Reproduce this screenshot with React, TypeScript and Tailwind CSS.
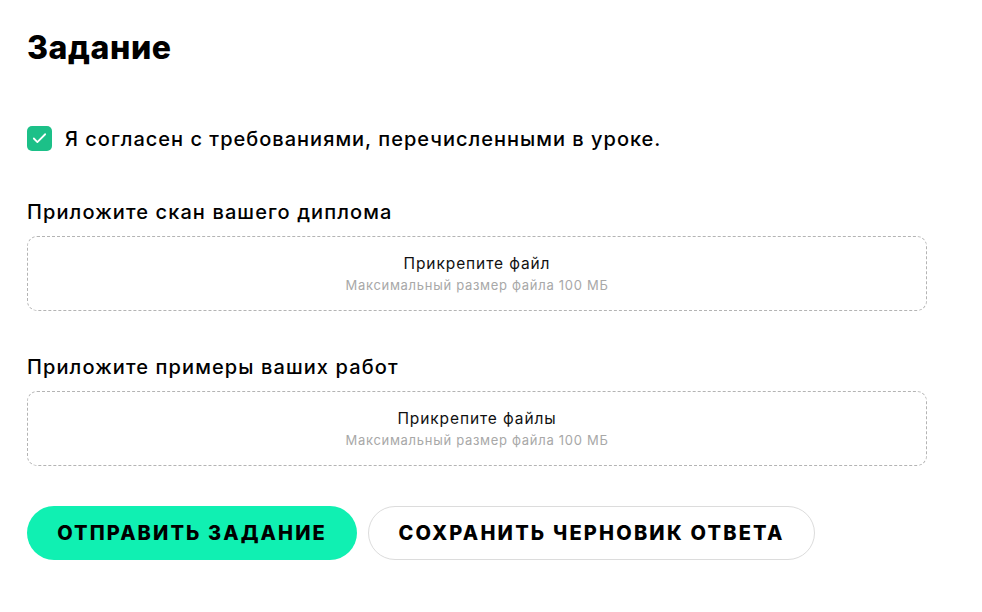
import { Check } from "lucide-react";

const FONT = { fontFamily: "Inter, 'Noto Sans', sans-serif" };

function Dropzone({ title }: { title: string }) {
  return (
    <div className="flex h-[75px] w-[900px] flex-col items-center justify-center rounded-[10px] border border-dashed border-[#b4b4b4]">
      <div className="text-[15.5px] leading-5 tracking-[0.9px] text-[#111]">{title}</div>
      <div className="mt-[3px] text-[13px] leading-4 tracking-[0.7px] text-[#a8a8a8]">
        Максимальный размер файла 100 МБ
      </div>
    </div>
  );
}

export default function App() {
  return (
    <div className="min-h-screen bg-white px-[27px] pt-[28px] text-black" style={FONT}>
      <h1 className="text-[32px] font-extrabold leading-10 tracking-[0.6px]">Задание</h1>

      {/* чекбокс */}
      <label className="mt-[58px] flex items-center gap-[13px]">
        <span className="flex h-[25px] w-[25px] items-center justify-center rounded-[5px] bg-[#1cc088]">
          <Check className="h-[17px] w-[17px] text-white" strokeWidth={2.5} />
        </span>
        <span className="text-[20px] font-medium leading-6 tracking-[1px]">
          Я согласен с требованиями, перечисленными в уроке.
        </span>
      </label>

      {/* файлы */}
      <div className="mt-[49px]">
        <div className="mb-[12px] text-[20px] font-medium leading-6 tracking-[1.1px]">Приложите скан вашего диплома</div>
        <Dropzone title="Прикрепите файл" />
      </div>
      <div className="mt-[44px]">
        <div className="mb-[12px] text-[20px] font-medium leading-6 tracking-[1.1px]">Приложите примеры ваших работ</div>
        <Dropzone title="Прикрепите файлы" />
      </div>

      {/* кнопки */}
      <div className="mt-[40px] flex gap-[11px]">
        <button className="h-[54px] w-[330px] rounded-full bg-[#10f0b2] text-[20px] font-extrabold uppercase tracking-[2.1px]">
          Отправить задание
        </button>
        <button className="h-[54px] w-[447px] rounded-full border border-[#dcdcdc] bg-white text-[20px] font-extrabold uppercase tracking-[2.2px]">
          Сохранить черновик ответа
        </button>
      </div>
    </div>
  );
}
